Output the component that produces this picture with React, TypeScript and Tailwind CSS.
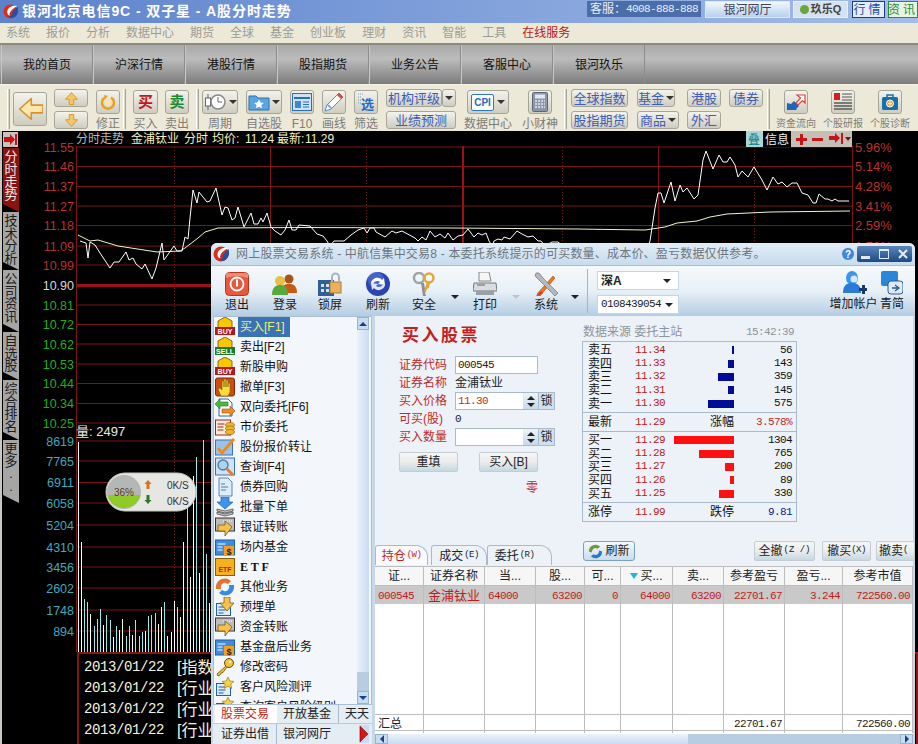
import type { ReactNode } from "react";

const MONO = "font-['Liberation_Mono',monospace]";

// chart data, screen coordinates (the svg viewBox starts at 20,131)
const gridY = [147, 166.5, 186.5, 206, 225.5, 246, 265, 305, 324.5, 344, 364, 383.5, 403.5, 423, 441, 461, 482.5, 503, 525, 547, 567, 588, 610, 631];
const leftPrice = [
  ["11.55", 147, "#b83232"], ["11.46", 166.5, "#b83232"], ["11.37", 186.5, "#b83232"], ["11.27", 206, "#b83232"], ["11.18", 225.5, "#b83232"],
  ["11.09", 246, "#b83232"], ["10.99", 265, "#b83232"], ["10.90", 285, "#d8d8d8"], ["10.81", 305, "#1fb01f"], ["10.72", 324.5, "#1fb01f"],
  ["10.62", 344, "#1fb01f"], ["10.53", 364, "#1fb01f"], ["10.44", 383.5, "#1fb01f"], ["10.34", 403.5, "#1fb01f"], ["10.25", 423, "#1fb01f"],
  ["8619", 441, "#3fa9bd"], ["7765", 461, "#3fa9bd"], ["6911", 482.5, "#3fa9bd"], ["6058", 503, "#3fa9bd"], ["5204", 525, "#3fa9bd"],
  ["4310", 547, "#3fa9bd"], ["3456", 567, "#3fa9bd"], ["2602", 588, "#3fa9bd"], ["1748", 610, "#3fa9bd"], ["894", 631, "#3fa9bd"],
] as const;
const rightPct = [["5.96%", 147], ["5.14%", 166.5], ["4.28%", 186.5], ["3.41%", 206], ["2.59%", 225.5], ["1.78%", 246]] as const;

const priceLine = [
  [80, 241], [86, 243], [88, 258], [90, 242], [95, 245], [100, 253], [110, 268], [114, 262], [119, 262], [126, 252], [129, 260], [133, 258], [136, 264], [142, 269], [145, 264], [152, 279], [156, 268], [162, 243], [164, 260], [174, 246], [177, 251], [182, 251],
  [185, 237], [188, 239], [190, 218], [193, 190], [197, 203], [199, 192], [207, 202], [210, 201], [216, 188], [222, 215], [225, 207], [228, 208], [232, 220], [235, 218], [238, 207], [244, 227], [251, 213], [254, 224], [258, 224], [261, 218], [263, 222], [267, 213], [271, 227], [275, 231], [281, 235], [285, 230], [289, 220], [292, 230], [296, 230], [299, 225], [310, 226], [317, 234], [323, 236], [327, 241],
  [330, 246], [334, 241], [344, 241], [351, 235], [358, 230], [364, 228], [367, 233], [370, 228], [374, 228], [376, 232], [385, 237], [392, 231], [396, 233], [402, 231], [415, 238], [418, 241], [422, 237], [426, 240], [430, 231], [435, 237], [440, 234], [445, 238], [448, 233], [453, 240], [458, 236], [463, 235], [468, 229], [474, 237], [478, 233], [482, 235], [486, 233], [489, 241],
  [492, 246], [494, 241], [498, 239], [502, 240], [504, 237], [510, 239], [517, 231], [522, 234], [528, 237], [533, 236], [538, 241], [541, 241], [545, 246], [552, 242], [558, 242], [563, 246],
  [648, 246], [650, 241], [655, 208], [658, 193], [661, 193], [664, 203], [671, 182], [675, 201], [680, 185], [683, 192], [687, 188], [694, 199], [698, 195], [703, 160], [706, 151], [713, 169], [719, 155], [723, 162], [727, 162], [730, 157], [735, 165], [738, 177], [742, 171], [748, 177], [754, 167], [762, 180], [767, 190], [773, 177], [778, 184], [782, 182], [787, 187], [792, 183], [797, 183], [802, 193], [808, 195], [813, 203], [816, 203], [819, 194], [825, 199], [828, 199], [832, 201], [835, 199], [838, 201], [849, 201],
];
const avgLine = [[78, 235], [90, 241], [98, 240], [118, 246], [157, 252], [180, 251], [185, 248], [198, 238], [205, 232], [218, 228], [300, 227.5], [452, 228], [577, 229], [645, 230], [665, 227], [677, 223], [697, 221], [710, 217], [727, 214], [770, 212], [850, 211]];
const volBars: [number, number, string][] = [
  [78, 442, "#fff"], [81, 542, "#fff"], [84, 599, "#9fe6e6"], [87, 602, "#9fe6e6"], [90, 614, "#fff"], [94, 626, "#9fe6e6"], [97, 619, "#9fe6e6"], [100, 609, "#9fe6e6"],
  [103, 625, "#fff"], [106, 615, "#9fe6e6"], [110, 620, "#9fe6e6"], [113, 637, "#fff"], [116, 626, "#9fe6e6"], [119, 630, "#fff"], [122, 619, "#ffffc8"], [126, 636, "#9fe6e6"],
  [129, 626, "#9fe6e6"], [132, 635, "#fff"], [135, 620, "#9fe6e6"], [139, 636, "#9fe6e6"], [142, 632, "#9fe6e6"], [145, 631, "#ffffc8"], [148, 616, "#9fe6e6"], [151, 615, "#9fe6e6"],
  [155, 613, "#9fe6e6"], [158, 624, "#ffffc8"], [161, 607, "#ffffc8"], [164, 602, "#9fe6e6"], [167, 636, "#ffffc8"], [171, 632, "#ffffc8"], [174, 601, "#fff"], [177, 607, "#9fe6e6"],
  [180, 617, "#ffffc8"], [183, 542, "#fff"], [187, 500, "#9fe6e6"], [190, 577, "#fff"], [193, 476, "#fff"], [196, 457, "#9fe6e6"], [199, 573, "#fff"], [203, 440, "#9fe6e6"], [206, 554, "#9fe6e6"], [209, 603, "#fff"],
];
const pts = (p: number[][]) => p.map((q) => q.join(",")).join(" ");

const sellRows = [["卖五", "11.34", 2, "56"], ["卖四", "11.33", 6, "143"], ["卖三", "11.32", 16, "359"], ["卖二", "11.31", 6, "145"], ["卖一", "11.30", 26, "575"]] as const;
const buyRows = [["买一", "11.29", 60, "1304"], ["买二", "11.28", 35, "765"], ["买三", "11.27", 9, "200"], ["买四", "11.26", 4, "89"], ["买五", "11.25", 15, "330"]] as const;

const treeItems: [string, string][] = [
  ["buy", "买入[F1]"], ["sell", "卖出[F2]"], ["buy", "新股申购"], ["hand", "撤单[F3]"], ["swap", "双向委托[F6]"], ["coin", "市价委托"], ["check", "股份报价转让"],
  ["search", "查询[F4]"], ["doc", "债券回购"], ["batch", "批量下单"], ["bank", "银证转账"], ["fund", "场内基金"], ["etf", "E T F"], ["other", "其他业务"],
  ["pre", "预埋单"], ["bank", "资金转账"], ["fund", "基金盘后业务"], ["key", "修改密码"], ["star", "客户风险测评"], ["star", "查询客户风险级别"],
];

const columns = ["证...", "证券名称", "当...", "股...", "可...", "买...", "卖...", "参考盈亏", "盈亏...", "参考市值"];
const rowCells = ["000545", "金浦钛业", "64000", "63200", "0", "64000", "63200", "22701.67", "3.244", "722560.00"];
const tableGrid = "grid grid-cols-[49px_61px_51px_49px_36px_52px_51px_61px_58px_70px]";

const Logo = ({ size = 15 }: { size?: number }) => (
  <svg width={size} height={size} viewBox="0 0 16 16" className="shrink-0">
    <circle cx="8" cy="8" r="7.5" fill="#d8301c" />
    <path d="M15 2C10 1 4 4 4.5 9c.3 2.5 2 3.5 3 3.2C6 10 8 6 15 2z" fill="#fff" />
    <path d="M15.5 3C12 6 10 8 9.5 11c-.2 1.5-2 2.5-4 2 3 3 8 2 10-3 .8-2.300.8-5 0-7z" fill="#2a4f9e" />
  </svg>
);

// small grip between toolbar groups
const Sep = ({ className = "" }: { className?: string }) => (
  <div className={"w-[3px] h-[40px] mt-[4px] shrink-0 border-l border-r border-l-white border-r-[#a8a690] bg-[#d8d5c4] " + className} />
);

const face = "rounded-[3px] border border-[#a5a59a] bg-linear-to-b from-[#f4f3ec] to-[#cfcdc0]";

const ToolItem = ({ className, label, small, children }: { className: string; label: string; small?: boolean; children: ReactNode }) => (
  <div className={"shrink-0 flex flex-col items-center mt-[5px] " + className}>
    <div className="h-[24px] flex justify-center">{children}</div>
    <span className={"mt-[3px] leading-[14px] text-[#7c7c78] whitespace-nowrap " + (small ? "text-[10px]" : "text-[12px]")}>{label}</span>
  </div>
);

const Caret = ({ className = "border-t-[#333]" }: { className?: string }) => (
  <span className={"inline-block w-0 h-0 border-l-[4px] border-r-[4px] border-t-[4px] border-l-transparent border-r-transparent " + className} />
);

const LinkBtn = ({ className, children, caret }: { className: string; children: ReactNode; caret?: boolean }) => (
  <div className={"h-[18px] flex items-center justify-center gap-[2px] shrink-0 text-[#3c5cb8] text-[13px] leading-none whitespace-nowrap " + face + " " + className}>
    {children}
    {caret && <Caret />}
  </div>
);

const TopIcon = ({ kind }: { kind: string }) => {
  switch (kind) {
    case "retry":
      return (
        <svg width="16" height="16" viewBox="0 0 16 16"><path d="M5 3.500A6 6 0 1 0 11 3.500" fill="none" stroke="#e8a020" strokeWidth="2.500" /><path d="M4 1l4 1-3 3z" fill="#e8a020" /><circle cx="8" cy="9" r="3" fill="#f8e6a8" /></svg>
      );
    case "period":
      return (
        <svg width="24" height="20" viewBox="0 0 24 20"><path d="M4 2v16" stroke="#666" /><rect x="1.500" y="6" width="5" height="8" fill="#fff" stroke="#666" /><circle cx="14" cy="10" r="7" fill="#fff" stroke="#888" strokeWidth="1.500" /><path d="M14 5v5h4" fill="none" stroke="#666" /></svg>
      );
    case "folder":
      return (
        <svg width="22" height="20" viewBox="0 0 22 20"><path d="M1 4h7l2 2h11v12H1z" fill="#5aa6e0" stroke="#2f6ea8" /><path d="M11 7.500l1.500 3 3.300.4-2.400 2.200.6 3.200L11 14.800 8 16.300l.6-3.200-2.400-2.200 3.300-.4z" fill="#fff" /></svg>
      );
    case "f10":
      return (
        <svg width="20" height="18" viewBox="0 0 20 18"><rect x=".5" y=".5" width="19" height="17" fill="#cfe3f7" stroke="#2a6cc0" /><rect x="2" y="4" width="16" height="2" fill="#2a6cc0" /><rect x="3" y="8" width="6" height="7" fill="#3f86d8" /><path d="M11 9h6M11 11.500h6M11 14h6" stroke="#2a6cc0" /></svg>
      );
    case "pencil":
      return (
        <svg width="20" height="20" viewBox="0 0 20 20"><path d="M15 1l4 4L7 17l-6 2 2-6z" fill="#fff" stroke="#5b8ac0" /><path d="M15 1l4 4-2 2-4-4z" fill="#d84c3a" /><path d="M4 13l3 3" stroke="#7aa6d8" strokeWidth="2" /></svg>
      );
    case "filter":
      return (
        <svg width="20" height="20" viewBox="0 0 20 20"><path d="M2 2h6M2 5h4M2 8h3M2 11h3" stroke="#7aa0b8" strokeDasharray="1 1" /><text x="5" y="17" fontSize="13" fontWeight="700" fill="#2468c8" fontFamily="'Noto Sans CJK SC',sans-serif">选</text></svg>
      );
    case "calc":
      return (
        <svg width="16" height="20" viewBox="0 0 16 20"><rect x=".5" y=".5" width="15" height="19" rx="1" fill="#8c97a8" stroke="#5b6678" /><rect x="3" y="2.500" width="10" height="4" fill="#dfe8f2" /><path d="M3 9h10M3 12h10M3 15h10" stroke="#dfe8f2" strokeWidth="1.500" strokeDasharray="2 1" /></svg>
      );
    case "flow":
      return (
        <svg width="20" height="18" viewBox="0 0 20 18"><path d="M1 17V10l4 1 3-3 5 5-3 3 1 1z" fill="#1f66b8" /><path d="M11 2h8v8l-2.500-2.500L12 12l-2-2 4.500-5z" fill="#fff" stroke="#d8463a" strokeWidth="1.200" /></svg>
      );
    case "report":
      return (
        <svg width="20" height="18" viewBox="0 0 20 18"><rect x="1" y="0" width="6" height="7" fill="#d81c1c" /><path d="M9 1h10M9 4h10M9 7h10" stroke="#888" strokeWidth="1.500" /><path d="M1 10h18M1 13h18M1 16h18" stroke="#5a5a5a" strokeWidth="1.600" /></svg>
      );
    case "case":
      return (
        <svg width="18" height="18" viewBox="0 0 18 18"><rect x="1" y="4" width="16" height="13" rx="1.500" fill="#1770ac" /><path d="M6 4V2h6v2" fill="none" stroke="#1770ac" strokeWidth="1.500" /><circle cx="9" cy="10.500" r="3.500" fill="#f2a238" stroke="#fff" /><path d="M9 8.500v4M7 10.500h4" stroke="#fff" /></svg>
      );
    default:
      return null;
  }
};

const BlockArrow = ({ dir, size }: { dir: "up" | "down" | "left"; size: number }) => {
  const d = dir === "left" ? "M2 10L11 2v5h9v6h-9v5z" : dir === "up" ? "M10 2l8 9h-5v7H7v-7H2z" : "M10 18l8-9h-5V2H7v7H2z";
  return (
    <svg width={size} height={size} viewBox="0 0 20 20">
      <path d={d} fill={dir === "left" ? "#fbe7ad" : "#f7c766"} stroke="#d8942a" strokeWidth="1.200" strokeLinejoin="round" />
    </svg>
  );
};

const TreeIcon = ({ kind }: { kind: string }) => {
  const wrap = (c: ReactNode) => <svg width="20" height="20" viewBox="0 0 20 20" className="shrink-0">{c}</svg>;
  const doc = <rect x="1.500" y="6.500" width="14" height="12" fill="#dcecfb" stroke="#1d5fa8" />;
  const lines = <path d="M3.500 10h7M3.500 13h7M3.500 16h5" stroke="#1d5fa8" />;
  switch (kind) {
    case "buy":
    case "sell":
      return wrap(
        <>
          <path d="M10 0l7 4v7H3V4z" fill="#f7c800" stroke="#96680c" />
          <rect x="0" y="10" width="20" height="8" fill={kind === "buy" ? "#b3161c" : "#1c7a28"} />
          <text x="10" y="16.500" textAnchor="middle" fontSize="7" fontWeight="700" fill="#fff" fontFamily="'Liberation Sans',sans-serif">{kind === "buy" ? "BUY" : "SELL"}</text>
        </>
      );
    case "hand":
      return wrap(
        <>
          <rect x=".5" y="1" width="19" height="18" rx="2" fill="#d14a12" stroke="#7a2a08" />
          <path d="M6 19l-3-7 2-1 2 2V4h2v6V2h2v8V3h2v7V6h2v9l-2 4z" fill="#f7de3c" stroke="#7a5a08" strokeWidth=".6" />
        </>
      );
    case "swap":
      return wrap(
        <>
          <path d="M4 2h9l4 4v13H4z" fill="#fff" stroke="#2a66ac" />
          <path d="M0 7l5-5v3h8v4H5v3z" fill="#49b83e" stroke="#1f7a1c" strokeWidth=".6" />
          <path d="M20 14l-5 5v-3H7v-4h8V9z" fill="#f08a24" stroke="#a0500c" strokeWidth=".6" />
        </>
      );
    case "coin":
      return wrap(
        <>
          <rect x=".5" y="3" width="15" height="15" fill="#fbeedd" stroke="#a0241c" />
          <path d="M2.500 7h7M2.500 10h6M2.500 13h6" stroke="#a0241c" />
          <ellipse cx="15" cy="8" rx="4.500" ry="2.500" fill="#f0b428" stroke="#8a5c0c" strokeWidth=".6" />
          <ellipse cx="15" cy="11.500" rx="4.500" ry="2.500" fill="#f0b428" stroke="#8a5c0c" strokeWidth=".6" />
          <ellipse cx="15" cy="15" rx="4.500" ry="2.500" fill="#f0b428" stroke="#8a5c0c" strokeWidth=".6" />
        </>
      );
    case "check":
      return wrap(
        <>
          <rect x=".5" y="3" width="17" height="15" fill="#9cc2ea" stroke="#3a72b8" />
          <path d="M3 11l4 5L19 2" fill="none" stroke="#ee8a1c" strokeWidth="2.800" />
        </>
      );
    case "search":
      return wrap(
        <>
          <rect x=".5" y="1" width="19" height="17" fill="#cfe2f7" stroke="#3a72b8" />
          <circle cx="8" cy="8" r="5" fill="#a9d4f4" stroke="#5a7c98" strokeWidth="1.400" />
          <path d="M12 12l6 6" stroke="#ee7a1c" strokeWidth="3" />
        </>
      );
    case "doc":
      return wrap(
        <>
          <path d="M4 1h9l4 4v14H4z" fill="#dcecfb" stroke="#5a84b8" />
          <path d="M6 7h4M6 10h7M6 13h5" stroke="#5a7ca0" />
        </>
      );
    case "batch":
      return wrap(
        <>
          <path d="M6 0h8v5h4l-8 7-8-7h4z" fill="#3a96ea" stroke="#1d5fa8" strokeWidth=".7" />
          <path d="M2 12l8 2 8-2v2l-8 2-8-2zM2 15l8 2 8-2v2l-8 2-8-2z" fill="#cfcfcf" stroke="#333" strokeWidth=".7" />
        </>
      );
    case "bank":
      return wrap(
        <>
          <rect x=".5" y="1" width="19" height="13" fill="#bdbdbd" stroke="#333" />
          <path d="M8 4h10" stroke="#fff" strokeDasharray="1 1" />
          <path d="M3 8h7V4l7 6-7 9v-5H3z" fill="#f7c04a" stroke="#6a4a10" strokeWidth=".7" />
        </>
      );
    case "fund":
      return wrap(
        <>
          <rect x=".5" y="3" width="19" height="15" fill="#3f8ce0" stroke="#1d5fa8" />
          <path d="M2.500 7h8M2.500 10h5M2.500 13h5" stroke="#fff" />
          <rect x="9" y="9" width="10" height="10" fill="#f0a020" />
          <text x="14" y="17.500" textAnchor="middle" fontSize="9" fontWeight="700" fill="#222" fontFamily="'Liberation Sans',sans-serif">$</text>
        </>
      );
    case "etf":
      return wrap(
        <>
          <rect x=".5" y="1.500" width="19" height="17" fill="#f6b21c" stroke="#8a5c0c" />
          <text x="10" y="15" textAnchor="middle" fontSize="7" fontWeight="700" fill="#b81c1c" fontFamily="'Liberation Sans',sans-serif">ETF</text>
        </>
      );
    case "other":
      return wrap(
        <>
          <path d="M1 12C0 5 6 0 13 2l3 2-3 3-2-1C8 5 5 8 6 12z" fill="#e8702c" />
          <path d="M19 8c1 7-5 12-12 10l-3-2 3-3 2 1c3 1 6-2 5-6z" fill="#3a8ae0" />
        </>
      );
    case "pre":
      return wrap(
        <>
          {doc}
          {lines}
          <path d="M9 0h6v6h4l-7 8-7-8h4z" fill="#f7c04a" stroke="#6a4a10" strokeWidth=".7" />
        </>
      );
    case "key":
      return wrap(
        <>
          <circle cx="14" cy="6" r="4.500" fill="#f2c230" stroke="#6a4a10" />
          <circle cx="15" cy="5" r="1.300" fill="#fff" />
          <path d="M11 9L2 17l1 2 2-1 1-2 2-.5L12 10" fill="#f2c230" stroke="#6a4a10" strokeWidth=".8" />
        </>
      );
    default:
      return wrap(
        <>
          {doc}
          {lines}
          <path d="M13 0l1.800 4 4.200.4-3.200 2.800 1 4.300L13 9.200 9.200 11.500l1-4.300L7 4.400l4.200-.4z" fill="#f7d23c" stroke="#96680c" strokeWidth=".6" />
        </>
      );
  }
};

const WinIcon = ({ kind }: { kind: string }) => {
  switch (kind) {
    case "exit":
      return (
        <svg width="24" height="24" viewBox="0 0 24 24"><rect x=".5" y=".5" width="23" height="23" rx="4" fill="#e8583c" stroke="#b8341e" /><path d="M1 6Q12 2 23 6V2Q23 1 20 1H4Q1 1 1 2z" fill="#f08a70" /><circle cx="12" cy="12" r="6.500" fill="none" stroke="#fff" strokeWidth="1.800" /><path d="M12 7.500v7" stroke="#fff" strokeWidth="2" /></svg>
      );
    case "login":
      return (
        <svg width="26" height="24" viewBox="0 0 26 24"><circle cx="17" cy="7" r="4.500" fill="#a8541c" /><path d="M9 21c0-8 4-9 8-9s8 1 8 9z" fill="#c85a18" /><circle cx="8" cy="9" r="5" fill="#e8c048" /><path d="M0 23c0-8 4-10 8-10s8 2 8 10z" fill="#58a83c" /></svg>
      );
    case "lock":
      return (
        <svg width="24" height="24" viewBox="0 0 24 24"><rect x="0" y="8" width="16" height="16" fill="#2f5f94" /><path d="M3 12h3v3H3zM8 12h3v3H8zM3 17h3v3H3zM8 17h3v3H8z" fill="#cfe2f5" /><rect x="12" y="10" width="11" height="11" fill="#e8b060" stroke="#b07c30" /><path d="M14 10V5a3.500 3.500 0 0 1 7 0v5" fill="none" stroke="#aab4c0" strokeWidth="2" /></svg>
      );
    case "refresh":
      return (
        <svg width="24" height="24" viewBox="0 0 24 24"><circle cx="12" cy="12" r="12" fill="#2a44b0" /><circle cx="10" cy="8" r="8" fill="#5a78d8" opacity=".6" /><path d="M5 11c1-5 8-7 11-3l2-2 1 7-7-1 2-2c-2-2-6-1-7 2z" fill="#fff" /><path d="M19 13c-1 5-8 7-11 3l-2 2-1-7 7 1-2 2c2 2 6 1 7-2z" fill="#dfe6f8" /></svg>
      );
    case "keys":
      return (
        <svg width="24" height="24" viewBox="0 0 24 24"><circle cx="7" cy="6" r="5" fill="none" stroke="#a0a4a8" strokeWidth="2.500" /><path d="M9 11l2 13h3l-1-3 1-2-1-2-1-6" fill="#8c9094" /><circle cx="17" cy="6" r="4.500" fill="none" stroke="#e0a838" strokeWidth="2.500" /><path d="M15 10l-3 9 2 1 1-3 2-1 1-5" fill="#e0a838" /></svg>
      );
    case "print":
      return (
        <svg width="24" height="24" viewBox="0 0 24 24"><path d="M6 0h10l2 9H6z" fill="#f6f6f6" stroke="#888" /><path d="M1 11h22l1 8H0z" fill="#d8dde2" stroke="#777" /><path d="M3 19h18v4H3z" fill="#9aa0a6" /><path d="M4 13h8" stroke="#666" /></svg>
      );
    case "tools":
      return (
        <svg width="24" height="24" viewBox="0 0 24 24"><path d="M3 22L19 4l2 2L6 24z" fill="#e87a1c" stroke="#b04a0c" strokeWidth=".6" /><path d="M2 1l3 0 4 5 15 15-3 3L6 9 1 4z" fill="#b4b8bc" stroke="#666" strokeWidth=".6" /><path d="M2 24l5-5 2 2-5 3z" fill="#d83a1c" /></svg>
      );
    case "user":
      return (
        <svg width="26" height="24" viewBox="0 0 26 24"><ellipse cx="11" cy="7" rx="6" ry="7" fill="#3a96ea" /><circle cx="13" cy="8" r="3.500" fill="#cfe8fb" /><path d="M2 22c0-8 4-10 9-10s9 2 9 10z" fill="#2a7ad8" /><path d="M18 17h3v-3h3v3h2v3h-2v3h-3v-3h-3z" fill="#143a70" /></svg>
      );
    case "skin":
      return (
        <svg width="22" height="24" viewBox="0 0 22 24"><rect x="0" y="0" width="17" height="15" rx="2" fill="#2a86d8" /><rect x="7" y="10" width="15" height="13" rx="3" fill="#dfeaf6" stroke="#2a5a98" /><path d="M11 17h7M14 14l4 3-4 3" fill="none" stroke="#2a5a98" strokeWidth="1.300" /></svg>
      );
    default:
      return null;
  }
};

const WinTool = ({ className, icon, label }: { className: string; icon: string; label: string }) => (
  <div className={"w-[44px] shrink-0 flex flex-col items-center pt-[6px] " + className}>
    <div className="h-[24px] flex items-center"><WinIcon kind={icon} /></div>
    <span className="mt-[1px] text-[12px] leading-[16px] text-[#1a1a1a]">{label}</span>
  </div>
);

const Spin = () => (
  <div className="w-[15px] h-[18px] flex flex-col items-center justify-center gap-[3px] bg-linear-to-b from-[#eef3f9] to-[#c8d8ea] border-y border-[#a8bbcd] shrink-0">
    <span className="w-0 h-0 border-l-[4px] border-r-[4px] border-b-[4px] border-l-transparent border-r-transparent border-b-[#222]" />
    <span className="w-0 h-0 border-l-[4px] border-r-[4px] border-t-[4px] border-l-transparent border-r-transparent border-t-[#222]" />
  </div>
);

const FormRow = ({ label, children }: { label: string; children: ReactNode }) => (
  <div className="h-[18px] flex items-center">
    <span className="w-[56px] shrink-0 text-[12px] text-[#c02a2a] whitespace-nowrap">{label}</span>
    {children}
  </div>
);

const DepthRow = ({ name, price, bar, color, vol }: { name: string; price: string; bar: number; color: string; vol: string }) => (
  <div className="h-[13.4px] flex items-center">
    <span className="w-[52px] pl-[5px] text-[12px] leading-none text-[#111]">{name}</span>
    <span className={"w-[34px] text-[11px] tracking-[-0.6px] leading-none text-[#b82020] " + MONO}>{price}</span>
    <div className="w-[65px] flex justify-end">
      <div className="h-[8px]" style={{ width: bar, backgroundColor: color }} />
    </div>
    <span className={"flex-1 pr-[4px] text-right text-[11px] tracking-[-0.6px] leading-none text-[#111] " + MONO}>{vol}</span>
  </div>
);

const DepthInfo = ({ a, ap, b, bp, bpc }: { a: string; ap: string; b: string; bp: string; bpc: string }) => (
  <div className="h-[18px] flex items-center">
    <span className="w-[52px] pl-[5px] text-[12px] leading-none text-[#111]">{a}</span>
    <span className={"w-[34px] text-[11px] tracking-[-0.6px] leading-none text-[#b82020] " + MONO}>{ap}</span>
    <span className="w-[65px] text-right text-[12px] leading-none text-[#111]">{b}</span>
    <span className={"flex-1 pr-[4px] text-right text-[11px] tracking-[-0.6px] leading-none " + MONO + " " + bpc}>{bp}</span>
  </div>
);

const GrayBtn = ({ className, children }: { className: string; children: ReactNode }) => (
  <div className={"h-[20px] flex items-center justify-center shrink-0 whitespace-nowrap rounded-[2px] border border-[#c4ccd4] bg-linear-to-b from-[#f6f6f6] via-[#ececec] to-[#c4d8e2] text-[12px] text-[#222] " + className}>
    {children}
  </div>
);

const Tab = ({ className, label, hot }: { className: string; label: string; hot: string }) => (
  <div className={"h-[20px] flex items-center justify-center shrink-0 rounded-tr-[12px] rounded-tl-[3px] border-t border-x border-[#a8bbcd] text-[12px] " + className}>
    {label}
    <span className={"ml-[1px] text-[9px] tracking-[-0.5px] " + MONO}>{hot}</span>
  </div>
);

const SideTab = ({ className, label, active }: { className: string; label: string; active?: boolean }) => (
  <div
    className={
      "w-[16px] ml-[1px] pt-[3px] flex flex-col items-center text-[13px] leading-[12.5px] [clip-path:polygon(0_0,100%_0,100%_100%,0_calc(100%-8px))] " +
      (active ? "bg-[#8c1212] text-[#e8e8e8] " : "bg-[#a6a6a6] text-[#1c1c1c] ") +
      className
    }
  >
    {label.split("").map((c, i) => (
      <span key={i}>{c}</span>
    ))}
  </div>
);

const Chart = () => (
  <svg width="898" height="521" viewBox="20 131 898 521" className="block shrink-0">
    <rect x="20" y="131" width="898" height="521" fill="#000" />
    {gridY.map((y) => (
      <line key={y} x1="76" x2="852" y1={y} y2={y} stroke="#7c1515" />
    ))}
    <rect x="76" y="284" width="776" height="3" fill="#9a1212" />
    {[76.5, 270.5, 658.5, 852.5].map((x) => (
      <line key={x} x1={x} x2={x} y1="146" y2="652" stroke="#7c1515" />
    ))}
    <rect x="462" y="146" width="2" height="100" fill="#a01010" />
    {[174.5, 366.5, 562.5, 754.5].map((x) => (
      <line key={x} x1={x} x2={x} y1="147" y2="652" stroke="#7c1515" strokeDasharray="1 2" />
    ))}
    {volBars.map(([x, y, c]) => (
      <rect key={x} x={x} y={y} width="1" height={652 - y} fill={c} />
    ))}
    <polyline points={pts(avgLine)} fill="none" stroke="#f4f2c8" strokeWidth="1" />
    <polyline points={pts(priceLine)} fill="none" stroke="#fff" strokeWidth="1" />

    <g fontFamily="'Liberation Sans',sans-serif" fontSize="12.500">
      {leftPrice.map(([t, y, c]) => (
        <text key={t} x="74" y={y + 4.500} textAnchor="end" fill={c}>{t}</text>
      ))}
    </g>
    <g fontFamily="'Liberation Sans',sans-serif" fontSize="13">
      {rightPct.map(([t, y]) => (
        <text key={t} x="855" y={y + 4.500} fill="#b83232">{t}</text>
      ))}
    </g>
    <g fontFamily="'Liberation Sans','Noto Sans CJK SC',sans-serif" fontSize="12">
      <text x="76" y="143" fill="#b8b8b8">分时走势</text>
      <text x="131" y="143" fill="#f2f2c0">金浦钛业</text>
      <text x="184" y="143" fill="#f2f2c0">分时</text>
      <text x="212" y="143" fill="#f2f2c0">均价:</text>
      <text x="245" y="143" fill="#f2f2c0">11.24</text>
      <text x="277" y="143" fill="#f2f2c0">最新:</text>
      <text x="305" y="143" fill="#f2f2c0">11.29</text>
      <text x="76" y="436" fill="#e8e8e8" fontSize="13">量: 2497</text>
    </g>

    {/* chips at the top right of the chart */}
    <rect x="746" y="131" width="106" height="16" fill="#c4c0b8" />
    <rect x="746" y="131" width="17" height="16" fill="#a8d8d8" />
    <text x="748" y="144" fontSize="12" fill="#0e7a88" fontFamily="'Noto Sans CJK SC',sans-serif">叠</text>
    <rect x="763" y="131" width="28" height="16" fill="#000" />
    <text x="765" y="144" fontSize="12" fill="#f0f0f0" fontFamily="'Noto Sans CJK SC',sans-serif">信息</text>
    <path d="M796 138h4v-4h3v4h4v3h-4v4h-3v-4h-4z" fill="#c81414" />
    <path d="M812 138h11v3h-11z" fill="#c81414" />
    <path d="M829 136h6v-3l5 5-5 5v-3h-6zM841 133h2v11h-2z" fill="#c81414" />
    <path d="M845 137h6l-3 4z" fill="#801010" />

    {/* network speed pill */}
    <rect x="106" y="473" width="90" height="38" rx="19" fill="#e6e6e2" stroke="#c4c4c0" />
    <circle cx="124" cy="492" r="17" fill="#b4b8b4" />
    <path d="M107.500 495a17 17 0 0 0 33 0z" fill="#8ccc24" />
    <text x="124" y="496" textAnchor="middle" fontSize="10" fill="#5a3a24" fontFamily="'Liberation Sans',sans-serif">36%</text>
    <path d="M148 480l3.500 4h-2v5h-3v-5h-2z" fill="#d8701c" />
    <path d="M148 504l3.500-4h-2v-5h-3v5h-2z" fill="#2a7a2a" />
    <g fontSize="10" fill="#333" fontFamily="'Liberation Sans',sans-serif">
      <text x="167" y="489">0K/S</text>
      <text x="167" y="505">0K/S</text>
    </g>
  </svg>
);

const App = () => {
  return (
    <div className="relative w-[918px] h-[744px] overflow-hidden flex flex-col bg-black text-[12px] font-['Liberation_Sans','Noto_Sans_CJK_SC',sans-serif]">
      {/* title bar */}
      <div className="h-[23px] shrink-0 flex items-center pl-[3px] bg-linear-to-r from-[#5c82cc] to-[#a4bde8]">
        <Logo />
        <span className="ml-[4px] text-[14px] font-bold text-white tracking-[0.9px] whitespace-nowrap">银河北京电信9C - 双子星 - A股分时走势</span>
        <div className="ml-auto flex items-start self-start mt-[1px]">
          <div className="w-[114px] h-[16px] flex items-center justify-center bg-[#4c6ea8] text-[12px] text-[#e8eef8] whitespace-nowrap">
            客服：<span className={"text-[11px] tracking-[-0.6px] " + MONO}>4008-888-888</span>
          </div>
          <div className="ml-[4px] w-[85px] h-[17px] flex items-center justify-center border border-[#e0e8f4] bg-linear-to-b from-[#f2f7fd] to-[#b8d0ee] text-[12px] text-[#445]">银河网厅</div>
          <div className="ml-[3px] w-[55px] h-[17px] flex items-center justify-center gap-[2px] bg-[#d6e2f0] border border-[#e8eef8] text-[11px] font-bold text-[#444]">
            <span className="w-[9px] h-[9px] rounded-full bg-[#6aa63a]" />玖乐Q
          </div>
          <div className="ml-[4px] w-[33px] h-[17px] flex items-center justify-center border border-[#1c3c8c] bg-[#e6eefa] text-[12px] text-[#1c4ca8] tracking-[3px]">行情</div>
          <div className="ml-[3px] w-[30px] h-[17px] flex items-center justify-center border border-[#2c8c3c] bg-[#e6f4e6] text-[12px] text-[#2a8a3a] tracking-[3px] whitespace-nowrap">资讯</div>
        </div>
      </div>

      {/* menu */}
      <div className="h-[20px] shrink-0 flex items-center gap-[16px] pl-[6px] bg-[#ece9d8] text-[12px] text-[#9c9c94] whitespace-nowrap">
        {["系统", "报价", "分析", "数据中心", "期货", "全球", "基金", "创业板", "理财", "资讯", "智能", "工具"].map((m) => (
          <span key={m}>{m}</span>
        ))}
        <span className="text-[#c01414]">在线服务</span>
      </div>

      {/* navigation band */}
      <div className="h-[41px] shrink-0 flex pl-[1px] border-t-2 border-[#8a8a80] bg-[linear-gradient(#a8a8a8,#bcbcbc_35%,#7c7c7c)]">
        {["我的首页", "沪深行情", "港股行情", "股指期货", "业务公告", "客服中心", "银河玖乐"].map((n) => (
          <div key={n} className="w-[92px] flex items-center justify-center border-r border-r-[#8c8c8c] border-l border-l-[#c8c8c8] text-[12px] text-[#111]">
            {n}
          </div>
        ))}
      </div>

      {/* tool bar */}
      <div className="h-[47px] shrink-0 flex items-start pl-[7px] bg-[#ece9d8] border-t border-[#f6f4ea] overflow-hidden">
        <Sep />
        <div className={"ml-[3px] w-[34px] h-[34px] mt-[7px] shrink-0 flex items-center justify-center " + face}><BlockArrow dir="left" size={26} /></div>
        <div className="ml-[7px] w-[34px] mt-[4px] shrink-0 flex flex-col gap-[4px]">
          <div className={"h-[18px] flex items-center justify-center " + face}><BlockArrow dir="up" size={15} /></div>
          <div className={"h-[18px] flex items-center justify-center " + face}><BlockArrow dir="down" size={15} /></div>
        </div>
        <ToolItem className="ml-[8px] w-[24px]" label="修正"><div className={"w-[24px] h-[24px] flex items-center justify-center " + face}><TopIcon kind="retry" /></div></ToolItem>
        <Sep className="ml-[3px]" />
        <ToolItem className="ml-[7px] w-[25px]" label="买入"><div className={"w-[25px] h-[24px] flex items-center justify-center text-[15px] font-bold text-[#c01818] " + face}>买</div></ToolItem>
        <ToolItem className="ml-[7px] w-[24px]" label="卖出"><div className={"w-[24px] h-[24px] flex items-center justify-center text-[15px] font-bold text-[#1c8a2c] " + face}>卖</div></ToolItem>
        <Sep className="ml-[7px]" />
        <ToolItem className="ml-[3px] w-[36px]" label="周期"><div className={"w-[36px] h-[24px] flex items-center justify-center gap-[1px] " + face}><TopIcon kind="period" /><Caret /></div></ToolItem>
        <ToolItem className="ml-[8px] w-[36px]" label="自选股"><div className={"w-[36px] h-[24px] flex items-center justify-center gap-[2px] " + face}><TopIcon kind="folder" /><Caret /></div></ToolItem>
        <ToolItem className="ml-[8px] w-[24px]" label="F10"><div className={"w-[24px] h-[24px] flex items-center justify-center " + face}><TopIcon kind="f10" /></div></ToolItem>
        <ToolItem className="ml-[8px] w-[24px]" label="画线"><div className={"w-[24px] h-[24px] flex items-center justify-center " + face}><TopIcon kind="pencil" /></div></ToolItem>
        <ToolItem className="ml-[8px] w-[24px]" label="筛选"><div className={"w-[24px] h-[24px] flex items-center justify-center " + face}><TopIcon kind="filter" /></div></ToolItem>
        <div className="ml-[8px] w-[70px] mt-[4px] shrink-0 flex flex-col gap-[4px]">
          <div className="flex">
            <LinkBtn className="w-[56px]">机构评级</LinkBtn>
            <LinkBtn className="w-[14px]" caret>{null}</LinkBtn>
          </div>
          <LinkBtn className="w-[70px]">业绩预测</LinkBtn>
        </div>
        <ToolItem className="ml-[8px] w-[48px]" label="数据中心">
          <div className={"w-[42px] h-[24px] flex items-center justify-center gap-[3px] " + face}>
            <span className="w-[23px] h-[17px] flex items-center justify-center rounded-[2px] border border-[#2a78c8] bg-white text-[10px] font-bold text-[#2a68b8]">CPI</span>
            <Caret />
          </div>
        </ToolItem>
        <ToolItem className="ml-[10px] w-[36px]" label="小财神"><div className={"w-[24px] h-[24px] flex items-center justify-center " + face}><TopIcon kind="calc" /></div></ToolItem>
        <Sep className="ml-[6px]" />
        <div className="ml-[4px] w-[192px] mt-[4px] shrink-0 flex flex-col gap-[4px]">
          <div className="flex">
            <LinkBtn className="w-[57px]">全球指数</LinkBtn>
            <LinkBtn className="ml-[9px] w-[38px]" caret>基金</LinkBtn>
            <LinkBtn className="ml-[12px] w-[34px]">港股</LinkBtn>
            <LinkBtn className="ml-[8px] w-[34px]">债券</LinkBtn>
          </div>
          <div className="flex">
            <LinkBtn className="w-[57px]">股指期货</LinkBtn>
            <LinkBtn className="ml-[9px] w-[42px]" caret>商品</LinkBtn>
            <LinkBtn className="ml-[8px] w-[34px]">外汇</LinkBtn>
          </div>
        </div>
        <Sep className="ml-[4px]" />
        <ToolItem className="ml-[6px] w-[40px]" label="资金流向" small><div className={"w-[24px] h-[24px] flex items-center justify-center " + face}><TopIcon kind="flow" /></div></ToolItem>
        <ToolItem className="ml-[7px] w-[40px]" label="个股研报" small><div className={"w-[24px] h-[24px] flex items-center justify-center " + face}><TopIcon kind="report" /></div></ToolItem>
        <ToolItem className="ml-[7px] w-[40px]" label="个股诊断" small><div className={"w-[24px] h-[24px] flex items-center justify-center " + face}><TopIcon kind="case" /></div></ToolItem>
      </div>

      {/* main area */}
      <div className="flex-1 min-h-0 flex bg-black">
        <div className="w-[20px] shrink-0 flex flex-col border-l-[2px] border-l-[#c8c8c0]">
          <div className="ml-[1px] mt-[1px] w-[15px] h-[15px] flex items-center justify-center bg-[#c8c4bc]">
            <svg width="13" height="11" viewBox="0 0 13 11"><path d="M0 3h6V0l5 5.500L6 11V8H0zM11 0h2v11h-2z" fill="#c81414" /></svg>
          </div>
          <SideTab className="h-[64px] mt-[1px]" label="分时走势" active />
          <SideTab className="h-[58px]" label="技术分析" />
          <SideTab className="h-[62px]" label="公司资讯" />
          <SideTab className="h-[48px]" label="自选股" />
          <SideTab className="h-[60px]" label="综合排名" />
          <SideTab className="h-[63px]" label="更多..." />
        </div>
        <div className="flex flex-col">
          <Chart />
          <div className="ml-[57px] flex-1 border-2 border-b-0 border-[#8a1414] pl-[5px] pt-[3px]">
            {["[指数", "[行业", "[行业", "[行业"].map((t, i) => (
              <div key={i} className="h-[21px] flex items-center text-[#f4f4e0] whitespace-nowrap">
                <span className={"w-[93px] text-[14px] tracking-[-0.4px] " + MONO}>2013/01/22</span>
                <span className="text-[16px]">{t}</span>
              </div>
            ))}
          </div>
        </div>
      </div>

      {/* trading window floating over the chart */}
      <div className="absolute left-[211px] top-[243px] w-[704px] h-[501px] flex flex-col overflow-hidden rounded-t-[6px] bg-[#c6d8ea]">
        <div className="h-[23px] shrink-0 flex items-center pl-[2px] bg-linear-to-b from-[#e2ecf6] to-[#c8dcee] border-b border-[#a6bfd6]">
          <Logo size={16} />
          <span className="ml-[7px] text-[12px] text-[#6c7680] whitespace-nowrap tracking-[0.2px]">网上股票交易系统 - 中航信集中交易8 - 本委托系统提示的可买数量、成本价、盈亏数据仅供参考。</span>
          <div className="ml-auto mr-[3px] flex items-center">
            <span className="w-[14px] h-[14px] rounded-full bg-[#3f88d8] border border-[#dbe8f6] flex items-center justify-center text-[10px] font-bold text-white">?</span>
            <div className="ml-[2px] w-[55px] h-[16px] flex items-center justify-around bg-linear-to-b from-[#5a86bc] to-[#1d4a86] rounded-[2px]">
              <span className="w-[9px] h-[3px] mt-[7px] bg-[#dfe8f4]" />
              <span className="w-[10px] h-[10px] border border-[#dfe8f4] border-t-2" />
              <svg width="10" height="10" viewBox="0 0 10 10"><path d="M1 1l8 8M9 1l-8 8" stroke="#e8eef6" strokeWidth="2" /></svg>
            </div>
          </div>
        </div>
        <div className="h-[50px] shrink-0 flex items-start pl-[4px] bg-linear-to-b from-[#f6f9fc] via-[#e8f0f7] to-[#b4cde4]">
          <WinTool className="" icon="exit" label="退出" />
          <WinTool className="ml-[4px]" icon="login" label="登录" />
          <WinTool className="ml-[1px]" icon="lock" label="锁屏" />
          <WinTool className="ml-[4px]" icon="refresh" label="刷新" />
          <WinTool className="ml-[2px]" icon="keys" label="安全" />
          <span className="ml-[5px] mt-[20px] shrink-0"><Caret className="border-t-[#222]" /></span>
          <WinTool className="ml-[4px]" icon="print" label="打印" />
          <span className="ml-[5px] mt-[20px] shrink-0"><Caret className="border-t-[#b8c4d0]" /></span>
          <WinTool className="ml-[4px]" icon="tools" label="系统" />
          <span className="ml-[3px] mt-[20px] shrink-0"><Caret className="border-t-[#222]" /></span>
          <div className="ml-[8px] mt-[3px] w-[1px] h-[44px] shrink-0 bg-[#9db6ce]" />
          <div className="ml-[9px] mt-[5px] shrink-0 flex flex-col gap-[5px]">
            <div className="w-[82px] h-[19px] flex items-center pl-[3px] pr-[7px] justify-between bg-white border border-[#c7d5e3] text-[12px] font-bold text-[#222]">
              深A<Caret className="border-t-[#222]" />
            </div>
            <div className={"w-[82px] h-[19px] flex items-center pl-[3px] pr-[5px] justify-between bg-white border border-[#c7d5e3] text-[11px] tracking-[-0.6px] text-[#222] " + MONO}>
              0108439054<Caret className="border-t-[#222]" />
            </div>
          </div>
          <div className="ml-auto mr-[11px] flex gap-[3px] text-[12px] text-[#1a1a1a]">
            <div className="w-[47px] flex flex-col items-center pt-[5px]"><WinIcon kind="user" /><span className="mt-[1px] leading-[16px] whitespace-nowrap">增加帐户</span></div>
            <div className="w-[24px] flex flex-col items-center pt-[5px]"><WinIcon kind="skin" /><span className="mt-[1px] leading-[16px] whitespace-nowrap">青简</span></div>
          </div>
        </div>

        <div className="flex-1 min-h-0 flex pl-[2px] pr-[2px]">
          {/* function tree */}
          <div className="w-[159px] shrink-0 flex flex-col">
            <div className="h-[389px] shrink-0 flex bg-[#f3f7fb] border border-[#aabfd4]">
              <div className="flex-1 min-w-0 overflow-hidden">
                {treeItems.map(([k, t], i) => (
                  <div key={i} className="h-[20px] flex items-center pl-[1px]">
                    <TreeIcon kind={k} />
                    <span className={"ml-[3px] h-[20px] px-[2px] flex items-center whitespace-nowrap text-[12px] " + (i === 0 ? "w-[52px] bg-[#3a72b8] text-[#eef06a] " : "text-[#111] ") + (k === "etf" ? "font-bold font-['Liberation_Serif',serif]" : "")}>
                      {t}
                    </span>
                  </div>
                ))}
              </div>
              <div className="w-[12px] mr-[2px] shrink-0 flex flex-col">
                <div className="h-[13px] flex items-center justify-center bg-[#c8dcf0] border border-[#9ab4ce]">
                  <span className="w-0 h-0 border-l-[4px] border-r-[4px] border-b-[4px] border-l-transparent border-r-transparent border-b-[#14408c]" />
                </div>
                <div className="h-[342px] bg-linear-to-r from-[#eaf2fa] to-[#c8dcf0]" />
                <div className="flex-1 bg-[#b8cde2]" />
                <div className="h-[13px] flex items-center justify-center bg-[#c8dcf0] border border-[#9ab4ce]">
                  <span className="w-0 h-0 border-l-[4px] border-r-[4px] border-t-[4px] border-l-transparent border-r-transparent border-t-[#14408c]" />
                </div>
              </div>
            </div>
            <div className="h-[19px] shrink-0 flex items-center pl-[2px] bg-[#e4ecf4] text-[12px] text-[#222] overflow-hidden whitespace-nowrap border-b border-[#b8cade]">
              <span className="w-[62px] pl-[6px] bg-white h-full flex items-center text-[#c81e1e]">股票交易</span>
              <span className="w-[62px] pl-[6px] h-full flex items-center border-r border-[#a8bbcd]">开放基金</span>
              <span className="pl-[6px]">天天</span>
            </div>
            <div className="h-[20px] shrink-0 flex items-center pl-[2px] bg-[#e4ecf4] text-[12px] text-[#222] whitespace-nowrap">
              <span className="w-[62px] pl-[6px] h-full flex items-center border-r border-[#a8bbcd]">证券出借</span>
              <span className="w-[62px] pl-[6px] h-full flex items-center">银河网厅</span>
              <svg width="10" height="18" viewBox="0 0 10 18" className="ml-[20px]"><rect width="10" height="18" fill="#c8dcf0" /><path d="M1 1l8 8-8 8z" fill="#d81414" stroke="#600" strokeWidth=".5" /></svg>
            </div>
          </div>

          <div className="ml-[3px] flex-1 min-w-0 flex flex-col">
            {/* order form and depth */}
            <div className="h-[224px] shrink-0 flex bg-[#ecf2f8]">
              <div className="w-[207px] shrink-0 pl-[24px] pt-[9px]">
                <div className="h-[22px] mb-[9px] pl-[3px] flex items-center text-[17px] font-bold tracking-[2.500px] text-[#c41e1e] font-['Liberation_Serif','Noto_Sans_CJK_SC',serif]">买入股票</div>
                <FormRow label="证券代码">
                  <div className={"w-[83px] h-[18px] pl-[2px] flex items-center bg-white border border-[#a8bbcd] text-[11px] tracking-[-0.6px] text-[#222] " + MONO}>000545</div>
                </FormRow>
                <FormRow label="证券名称"><span className="text-[12px] text-[#222]">金浦钛业</span></FormRow>
                <FormRow label="买入价格">
                  <div className={"w-[68px] h-[18px] pl-[2px] flex items-center bg-white border border-[#a8bbcd] border-r-0 text-[11px] tracking-[-0.6px] text-[#c02a2a] " + MONO}>11.30</div>
                  <Spin />
                  <div className="w-[17px] h-[18px] flex items-center justify-center bg-[#cfe0f2] border border-[#a8bbcd] text-[12px] text-[#222]">锁</div>
                </FormRow>
                <FormRow label="可买(股)"><span className={"text-[11px] text-[#222] " + MONO}>0</span></FormRow>
                <FormRow label="买入数量">
                  <div className="w-[68px] h-[18px] bg-white border border-[#a8bbcd] border-r-0" />
                  <Spin />
                  <div className="w-[17px] h-[18px] flex items-center justify-center bg-[#cfe0f2] border border-[#a8bbcd] text-[12px] text-[#222]">锁</div>
                </FormRow>
                <div className="mt-[6px] flex">
                  <GrayBtn className="w-[59px]">重填</GrayBtn>
                  <GrayBtn className="ml-[21px] w-[59px]">买入[B]</GrayBtn>
                </div>
                <div className="mt-[8px] w-[139px] text-right text-[12px] leading-[16px] text-[#c41e1e]">零</div>
              </div>
              <div className="w-[215px] shrink-0">
                <div className="h-[25px] pl-[1px] pr-[3px] flex items-end justify-between text-[12px] text-[#8c949c] leading-[18px]">
                  <span>数据来源 委托主站</span>
                  <span className={"text-[11px] tracking-[-0.6px] " + MONO}>15:42:39</span>
                </div>
                <div className="border border-[#a8bbcd]">
                  <div className="h-[70px] flex flex-col justify-center">
                    {sellRows.map(([n, p, b, v]) => (
                      <DepthRow key={n} name={n} price={p} bar={b} color="#000c96" vol={v} />
                    ))}
                  </div>
                  <div className="border-t border-b border-[#a8bbcd]">
                    <DepthInfo a="最新" ap="11.29" b="涨幅" bp="3.578%" bpc="text-[#c02a2a]" />
                  </div>
                  <div className="h-[70px] flex flex-col justify-center">
                    {buyRows.map(([n, p, b, v]) => (
                      <DepthRow key={n} name={n} price={p} bar={b} color="#ff1010" vol={v} />
                    ))}
                  </div>
                  <div className="border-t border-[#a8bbcd]">
                    <DepthInfo a="涨停" ap="11.99" b="跌停" bp="9.81" bpc="text-[#101a80]" />
                  </div>
                </div>
              </div>
            </div>

            {/* positions */}
            <div className="h-[26px] shrink-0 flex items-start bg-[#ecf2f8]">
              <div className="mt-[5px] flex">
                <Tab className="w-[53px] bg-[#f8fafc] text-[#c41e1e]" label="持仓" hot="(W)" />
                <Tab className="ml-[3px] w-[56px] text-[#222]" label="成交" hot="(E)" />
                <Tab className="w-[65px] pr-[10px] text-[#222]" label="委托" hot="(R)" />
              </div>
              <div className="ml-[31px] mt-[1px] w-[52px] h-[20px] flex items-center justify-center gap-[2px] rounded-[3px] border border-[#7ca0c0] bg-linear-to-b from-[#f4f8fb] to-[#cadcec] text-[12px] text-[#222] shrink-0">
                <svg width="15" height="15" viewBox="0 0 16 16"><path d="M1 8a7 7 0 0 1 12-5l-3 2C8 3 4 5 4 9z" fill="#6a9a3c" /><path d="M15 8a7 7 0 0 1-12 5l3-2c2 2 6 0 6-4z" fill="#2a78c8" /></svg>
                刷新
              </div>
              <GrayBtn className="ml-[119px] mt-[1px] w-[61px]">全撤<span className={"ml-[1px] text-[9px] " + MONO}>(Z /)</span></GrayBtn>
              <GrayBtn className="ml-[7px] mt-[1px] w-[49px]">撤买<span className={"text-[9px] tracking-[-0.5px] " + MONO}>(X)</span></GrayBtn>
              <GrayBtn className="ml-[5px] mt-[1px] w-[39px] justify-start pl-[2px] overflow-hidden">撤卖<span className={"text-[9px] " + MONO}>(</span></GrayBtn>
            </div>
            <div className="h-[168px] shrink-0 flex flex-col bg-white overflow-hidden">
              <div className={tableGrid + " h-[20px] shrink-0 bg-[#f6f6f6] border-t border-b border-[#bdbdbd]"}>
                {columns.map((c, i) => (
                  <div key={i} className="flex items-center justify-center border-r border-[#bdbdbd] text-[12px] text-[#222] whitespace-nowrap">
                    {i === 5 && <span className="mr-[2px] w-0 h-0 border-l-[4px] border-r-[4px] border-t-[6px] border-l-transparent border-r-transparent border-t-[#18b8d8]" />}
                    {c}
                  </div>
                ))}
              </div>
              <div className={tableGrid + " h-[18px] shrink-0 bg-[#c9c9c9]"}>
                {rowCells.map((c, i) => (
                  <div key={i} className={"flex items-center border-r border-[#bdbdbd] whitespace-nowrap text-[#c01c1c] " + (i === 1 ? "justify-center text-[13px]" : "text-[11px] tracking-[-0.6px] " + MONO + (i === 0 || i === 2 ? " pl-[3px]" : " justify-end pr-[2px]"))}>
                    {c}
                  </div>
                ))}
              </div>
              <div className={tableGrid + " h-[110px] shrink-0"}>
                {columns.map((_, i) => (
                  <div key={i} className="border-r border-[#bdbdbd]" />
                ))}
              </div>
              <div className={tableGrid + " h-[17px] shrink-0 border-t border-b border-[#bdbdbd] text-[#222]"}>
                {columns.map((_, i) => (
                  <div key={i} className={"flex items-center whitespace-nowrap border-r border-[#bdbdbd] " + (i === 0 ? "pl-[3px] text-[12px]" : "justify-end pr-[2px] text-[11px] tracking-[-0.6px] " + MONO)}>
                    {i === 0 ? "汇总" : i === 7 ? "22701.67" : i === 9 ? "722560.00" : ""}
                  </div>
                ))}
              </div>
            </div>
            <div className="h-[10px] shrink-0 flex bg-[#b8cde2]">
              <div className="w-[13px] flex items-center justify-center bg-[#c8dcf0] border border-[#9ab4ce]">
                <span className="w-0 h-0 border-t-[4px] border-b-[4px] border-r-[4px] border-t-transparent border-b-transparent border-r-[#14408c]" />
              </div>
              <div className="w-[300px] bg-linear-to-b from-[#eaf2fa] to-[#c8dcf0]" />
              <div className="flex-1" />
              <div className="w-[13px] flex items-center justify-center bg-[#c8dcf0] border border-[#9ab4ce]">
                <span className="w-0 h-0 border-t-[4px] border-b-[4px] border-l-[4px] border-t-transparent border-b-transparent border-l-[#14408c]" />
              </div>
            </div>
          </div>
        </div>
      </div>
    </div>
  );
};

export default App;
